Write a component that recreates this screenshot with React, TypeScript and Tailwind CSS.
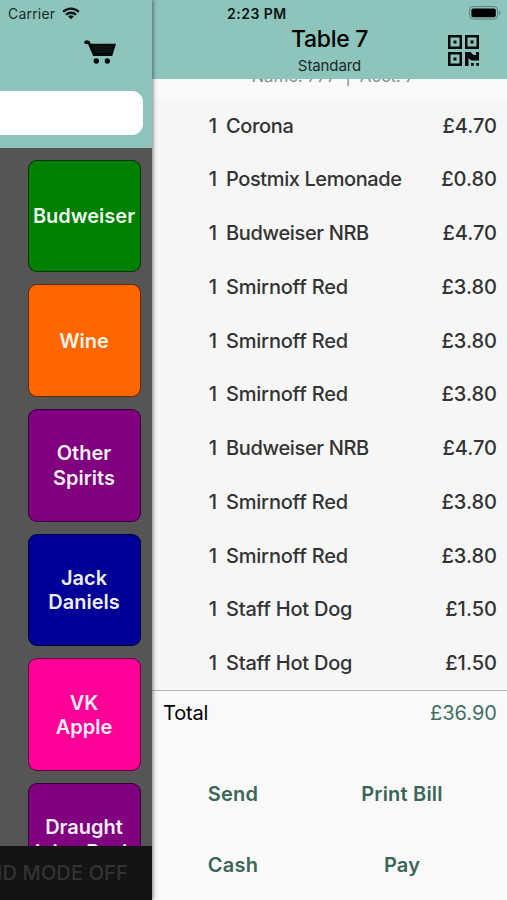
const items: { name: string; price: string; tracking: string }[] = [
  { name: "Corona", price: "£4.70", tracking: "tracking-[-0.35px]" },
  { name: "Postmix Lemonade", price: "£0.80", tracking: "tracking-[-0.4px]" },
  { name: "Budweiser NRB", price: "£4.70", tracking: "tracking-[-0.35px]" },
  { name: "Smirnoff Red", price: "£3.80", tracking: "tracking-[-0.2px]" },
  { name: "Smirnoff Red", price: "£3.80", tracking: "tracking-[-0.2px]" },
  { name: "Smirnoff Red", price: "£3.80", tracking: "tracking-[-0.2px]" },
  { name: "Budweiser NRB", price: "£4.70", tracking: "tracking-[-0.35px]" },
  { name: "Smirnoff Red", price: "£3.80", tracking: "tracking-[-0.2px]" },
  { name: "Smirnoff Red", price: "£3.80", tracking: "tracking-[-0.2px]" },
  { name: "Staff Hot Dog", price: "£1.50", tracking: "tracking-[-0.2px]" },
  { name: "Staff Hot Dog", price: "£1.50", tracking: "tracking-[-0.2px]" },
];

const tiles: { lines: string[]; color: string }[] = [
  { lines: ["Budweiser"], color: "bg-[#008000]" },
  { lines: ["Wine"], color: "bg-[#ff6600]" },
  { lines: ["Other", "Spirits"], color: "bg-[#800080]" },
  { lines: ["Jack", "Daniels"], color: "bg-[#000099]" },
  { lines: ["VK", "Apple"], color: "bg-[#ff0099]" },
  { lines: ["Draught", "Juice Basin"], color: "bg-[#800080]" },
];

function WifiIcon() {
  return (
    <svg className="-mt-[2px] h-[13px] w-[18px]" viewBox="0 0 18 13" fill="none" stroke="#0c1413" strokeWidth="2.3">
      <path d="M1.2 4.9a11 11 0 0 1 15.6 0" />
      <path d="M4 7.8a7.1 7.1 0 0 1 10 0" />
      <path d="M9 12.3 6.2 9.5a4 4 0 0 1 5.6 0z" fill="#0c1413" stroke="none" />
    </svg>
  );
}

function CartIcon() {
  return (
    <svg className="h-[24px] w-[33px]" viewBox="0 0 33 24">
      <path d="M2.5 2.2h2.2L10 14.7h17" fill="none" stroke="#050a0a" strokeWidth="2.6" strokeLinecap="round" />
      <ellipse cx="2.8" cy="2.2" rx="2.6" ry="2" fill="#050a0a" />
      <path d="M5.5 3.8H32L28.3 15.8H10.2z" fill="#050a0a" />
      <path d="M10 6.8h19M10.8 9.3h17.4M11.8 11.8h15.6" stroke="#35504c" strokeWidth=".7" strokeDasharray="1.2 1.2" />
      <circle cx="12.3" cy="21" r="2.7" fill="#050a0a" />
      <circle cx="23.3" cy="21" r="2.7" fill="#050a0a" />
    </svg>
  );
}

function QrIcon() {
  return (
    <svg className="h-[31px] w-[31px]" viewBox="0 0 31 31" fill="#050a0a">
      <path fillRule="evenodd" d="M0 0h14v14H0zM2.5 2.5v9h9v-9zM17 0h14v14H17zM19.5 2.5v9h9v-9zM0 17h14v14H0zM2.5 19.5v9h9v-9z" />
      <path d="M5.5 5.5h3v3h-3zM22.5 5.5h3v3h-3zM5.5 22.5h3v3h-3z" />
      <path d="M17 17h5.5l3 3H28v-3h3v8.500h-7.500l-3-2.500V31H17zM23 28h2.800v2.800H23zM28.200 28H31v2.800h-2.800z" />
    </svg>
  );
}

function BatteryIcon() {
  return (
    <svg className="-mt-[2px] h-[14px] w-[32px]" viewBox="0 0 32 14">
      <rect x=".6" y=".6" width="28" height="12.4" rx="3.4" fill="none" stroke="#55807a" strokeWidth="1" />
      <rect x="2.4" y="2.4" width="24.4" height="8.8" rx="1.8" fill="#000" />
      <path d="M30.2 4.8c1.7.7 1.7 3.4 0 4.1z" fill="#55807a" />
    </svg>
  );
}

function MenuPanel() {
  return (
    <aside className="relative z-10 flex h-full w-[152px] shrink-0 flex-col bg-[#555555] shadow-[1px_0_4px_rgba(0,0,0,0.5)]">
      <header className="flex h-[148px] shrink-0 flex-col bg-[#8dc5bc]">
        <div className="flex h-7 items-center gap-[7px] pl-2 text-[#1c2a28]">
          <span className="-mt-px w-[47px] whitespace-nowrap text-[14px] leading-[24px] tracking-[0.2px]">Carrier</span>
          <WifiIcon />
        </div>
        <div className="flex h-[63px] justify-end pr-[35px] pt-3">
          <CartIcon />
        </div>
        <div className="h-[44px] w-[143px] rounded-r-[11px] bg-white" />
      </header>
      <div className="flex min-h-0 flex-1 flex-col items-end gap-3 overflow-hidden pr-[11.5px] pt-[11.5px]">
        {tiles.map((t) => (
          <div
            key={t.lines[0]}
            className={`flex h-[112.7px] w-[113px] shrink-0 flex-col items-center justify-center rounded-[9px] border border-black/60 pt-px text-[20px] font-semibold leading-[24.5px] whitespace-nowrap text-white/95 ${t.color}`}
          >
            {t.lines.map((l) => (
              <span key={l}>{l}</span>
            ))}
          </div>
        ))}
      </div>
      <footer className="flex h-[54px] shrink-0 items-center justify-end overflow-hidden bg-[#141414] pr-6 text-[20px] font-medium whitespace-nowrap text-[#333333]">
        <span className="tracking-[0.15px]">ROUND MODE OFF</span>
      </footer>
    </aside>
  );
}

function OrderPanel() {
  return (
    <main className="flex h-full min-w-0 flex-1 flex-col bg-[#f9f9f9]">
      <header className="flex h-[79px] shrink-0 bg-[#8dc5bc]">
        <div className="w-[67px] shrink-0" />
        <div className="flex w-[221px] flex-col items-center">
          <div className="flex h-7 w-full items-center pl-[8px] text-[14px] font-semibold whitespace-nowrap text-[#0c1413]">
            <span className="-mt-px tracking-[0.5px]">2:23 PM</span>
          </div>
          <h1 className="-mt-[3px] text-[23px] font-medium leading-[28px] tracking-[-0.3px] text-black">Table 7</h1>
          <p className="mt-1 text-[15px] leading-[18px] tracking-[-0.1px] text-[#1c2a28]">Standard</p>
        </div>
        <div className="flex flex-1 flex-col items-end">
          <div className="flex h-7 items-center pr-[6px]">
            <BatteryIcon />
          </div>
          <div className="pr-7 pt-[7px]">
            <QrIcon />
          </div>
        </div>
      </header>
      <section className="flex h-[611px] shrink-0 flex-col justify-end overflow-hidden bg-[#f6f6f6]">
        <div className="flex h-[72px] shrink-0 items-start justify-center bg-[#fafafa] text-[17px] leading-[20px] whitespace-pre text-[#8b8b8b]">
          <span className="pt-[39.5px] pl-[7px] tracking-[-0.2px]">Name: 777  |  Acct: 7</span>
        </div>
        {items.map(({ name, price, tracking }, i) => (
          <div
            key={i}
            className="flex h-[53.75px] shrink-0 items-center bg-[#f6f6f6] pr-[10px] text-[20px] font-medium whitespace-nowrap text-[#333333]"
          >
            <span className="w-[65px] text-right">1</span>
            <span className={`ml-[9px] flex-1 ${tracking}`}>{name}</span>
            <span>{price}</span>
          </div>
        ))}
      </section>
      <div className="flex h-[45px] shrink-0 items-center justify-between border-t border-[#b4b4b4] pr-[10px] pl-[11px] text-[20px]">
        <span className="tracking-[-0.2px] text-black">Total</span>
        <span className="text-[#3f6f63]">£36.90</span>
      </div>
      <div className="grid grid-cols-[162px_176px] pt-[24px] text-center text-[20px] font-semibold leading-[71px] tracking-[0.2px] text-[#3a6658]">
        <span>Send</span>
        <span>Print Bill</span>
        <span>Cash</span>
        <span>Pay</span>
      </div>
    </main>
  );
}

export default function App() {
  return (
    <div className="flex h-[900px] w-[507px] overflow-hidden bg-[#f9f9f9] font-['Inter','Liberation_Sans',sans-serif]">
      <MenuPanel />
      <OrderPanel />
    </div>
  );
}
